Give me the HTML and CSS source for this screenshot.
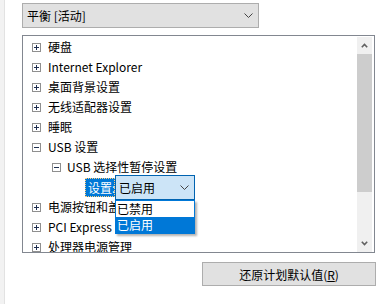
FILE: index.html
```html
<!DOCTYPE html>
<html lang="zh-CN">
<head>
<meta charset="utf-8">
<link rel="stylesheet" href="styles.css">
</head>
<body>
<div class="window">
  <div class="strip"></div>
  <div class="main">
    <div class="select">
      <span class="select-text">平衡 [活动]</span>
      <svg class="chev" width="9" height="5" viewBox="0 0 9 5"><polyline points="0.5,0.5 4.5,4.5 8.5,0.5" fill="none" stroke="#444" stroke-width="1"/></svg>
    </div>
    <div class="tree">
      <div class="rows">
        <div class="row l1"><svg class="box" width="9" height="9" viewBox="0 0 9 9"><rect x=".5" y=".5" width="8" height="8" fill="#fff" stroke="#8f8f8f"/><path d="M2 4.5h5M4.5 2v5" stroke="#1f2f50"/></svg><span class="label">硬盘</span></div>
        <div class="row l1"><svg class="box" width="9" height="9" viewBox="0 0 9 9"><rect x=".5" y=".5" width="8" height="8" fill="#fff" stroke="#8f8f8f"/><path d="M2 4.5h5M4.5 2v5" stroke="#1f2f50"/></svg><span class="label">Internet Explorer</span></div>
        <div class="row l1"><svg class="box" width="9" height="9" viewBox="0 0 9 9"><rect x=".5" y=".5" width="8" height="8" fill="#fff" stroke="#8f8f8f"/><path d="M2 4.5h5M4.5 2v5" stroke="#1f2f50"/></svg><span class="label">桌面背景设置</span></div>
        <div class="row l1"><svg class="box" width="9" height="9" viewBox="0 0 9 9"><rect x=".5" y=".5" width="8" height="8" fill="#fff" stroke="#8f8f8f"/><path d="M2 4.5h5M4.5 2v5" stroke="#1f2f50"/></svg><span class="label">无线适配器设置</span></div>
        <div class="row l1"><svg class="box" width="9" height="9" viewBox="0 0 9 9"><rect x=".5" y=".5" width="8" height="8" fill="#fff" stroke="#8f8f8f"/><path d="M2 4.5h5M4.5 2v5" stroke="#1f2f50"/></svg><span class="label">睡眠</span></div>
        <div class="row l1"><svg class="box" width="9" height="9" viewBox="0 0 9 9"><rect x=".5" y=".5" width="8" height="8" fill="#fff" stroke="#8f8f8f"/><path d="M2 4.5h5" stroke="#1f2f50"/></svg><span class="label">USB 设置</span></div>
        <div class="row l2"><svg class="box" width="9" height="9" viewBox="0 0 9 9"><rect x=".5" y=".5" width="8" height="8" fill="#fff" stroke="#8f8f8f"/><path d="M2 4.5h5" stroke="#1f2f50"/></svg><span class="label">USB 选择性暂停设置</span></div>
        <div class="row l3">
          <span class="focus-label">设置:</span>
          <div class="combo">
            <span class="combo-text">已启用</span>
            <svg class="chev" width="9" height="5" viewBox="0 0 9 5"><polyline points="0.5,0.5 4.5,4.5 8.5,0.5" fill="none" stroke="#444" stroke-width="1"/></svg>
            <div class="list">
              <div class="opt">已禁用</div>
              <div class="opt sel">已启用</div>
            </div>
          </div>
        </div>
        <div class="row l1"><svg class="box" width="9" height="9" viewBox="0 0 9 9"><rect x=".5" y=".5" width="8" height="8" fill="#fff" stroke="#8f8f8f"/><path d="M2 4.5h5M4.5 2v5" stroke="#1f2f50"/></svg><span class="label">电源按钮和盖子</span></div>
        <div class="row l1"><svg class="box" width="9" height="9" viewBox="0 0 9 9"><rect x=".5" y=".5" width="8" height="8" fill="#fff" stroke="#8f8f8f"/><path d="M2 4.5h5M4.5 2v5" stroke="#1f2f50"/></svg><span class="label">PCI Express</span></div>
        <div class="row l1"><svg class="box" width="9" height="9" viewBox="0 0 9 9"><rect x=".5" y=".5" width="8" height="8" fill="#fff" stroke="#8f8f8f"/><path d="M2 4.5h5M4.5 2v5" stroke="#1f2f50"/></svg><span class="label">处理器电源管理</span></div>
      </div>
      <div class="scrollbar">
        <div class="arrow"><svg width="7" height="5" viewBox="0 0 7 5"><polyline points="0.8,4.2 3.5,1.5 6.2,4.2" fill="none" stroke="#606060" stroke-width="1.6"/></svg></div>
        <div class="thumb"></div>
        <div class="track"></div>
        <div class="arrow"><svg width="7" height="5" viewBox="0 0 7 5"><polyline points="0.8,0.8 3.5,3.5 6.2,0.8" fill="none" stroke="#606060" stroke-width="1.6"/></svg></div>
      </div>
    </div>
    <div class="actions">
      <button class="btn">还原计划默认值(<u>R</u>)</button>
    </div>
  </div>
</div>
</body>
</html>
```

FILE: styles.css
```css
html, body {
  margin: 0;
  padding: 0;
  background: #ffffff;
}
body {
  font-family: "Noto Sans CJK SC", "Noto Sans", sans-serif;
  font-size: 12px;
  color: #000;
}
.window {
  display: flex;
  width: 385px;
  height: 304px;
  overflow: hidden;
}
.strip {
  width: 4px;
  flex: none;
  background: #f2f2f2;
  border-right: 1px solid #e2e2e2;
}
.main {
  padding-left: 17px;
  display: flex;
  flex-direction: column;
}
.select {
  margin-top: 3px;
  width: 237px;
  height: 25px;
  box-sizing: border-box;
  border: 1px solid #adadad;
  background: #e1e1e1;
  display: flex;
  align-items: center;
  padding-left: 4px;
  padding-right: 5px;
}
.select-text {
  flex: 1;
  line-height: 20px;
}
.tree {
  margin-top: 7px;
  width: 353px;
  height: 218px;
  box-sizing: border-box;
  border: 1px solid #828790;
  background: #fff;
  display: flex;
}
.rows {
  flex: 1;
  padding-top: 1px;
  overflow: hidden;
}
.row {
  height: 20px;
  display: flex;
  align-items: center;
  white-space: nowrap;
}
.row.l1 { padding-left: 9px; }
.row.l2 { padding-left: 29px; }
.row.l3 { padding-left: 62px; }
.box {
  flex: none;
  margin-right: 7px;
}
.row.l2 .box { margin-right: 6px; }
.label {
  line-height: 20px;
}
.focus-label {
  background: #0078d7;
  color: #fff;
  height: 19px;
  line-height: 17px;
  box-sizing: border-box;
  padding: 0 1px 0 2px;
  border: 1px dotted #ffcf80;
  width: 30px;
}
.combo {
  position: relative;
  width: 80px;
  height: 25px;
  box-sizing: border-box;
  border: 1px solid #0063b1;
  background: #cce4f7;
  display: flex;
  align-items: center;
  padding: 0 5px 0 3px;
}
.combo-text {
  flex: 1;
}
.list {
  position: absolute;
  left: -1px;
  top: 24px;
  width: 80px;
  box-sizing: border-box;
  border: 1px solid #0078d7;
  background: #fff;
  box-shadow: 2px 2px 2px rgba(0,0,0,0.3);
  z-index: 2;
}
.opt {
  height: 16px;
  line-height: 16px;
  padding-left: 1px;
}
.opt.sel {
  background: #0078d7;
  color: #fff;
}
.scrollbar {
  flex: none;
  width: 15px;
  margin: 1px 2px 0 0;
  background: #f0f0f0;
  display: flex;
  flex-direction: column;
}
.arrow {
  height: 17px;
  display: flex;
  align-items: center;
  justify-content: center;
  flex: none;
}
.thumb {
  height: 138px;
  background: #cdcdcd;
  flex: none;
}
.track {
  flex: 1;
}
.actions {
  margin-top: 9px;
  display: flex;
  justify-content: flex-end;
  width: 354px;
}
.btn {
  width: 174px;
  height: 24px;
  box-sizing: border-box;
  border: 1px solid #adadad;
  background: #e1e1e1;
  font-family: inherit;
  font-size: 12px;
  color: #000;
  padding: 0;
}
```
